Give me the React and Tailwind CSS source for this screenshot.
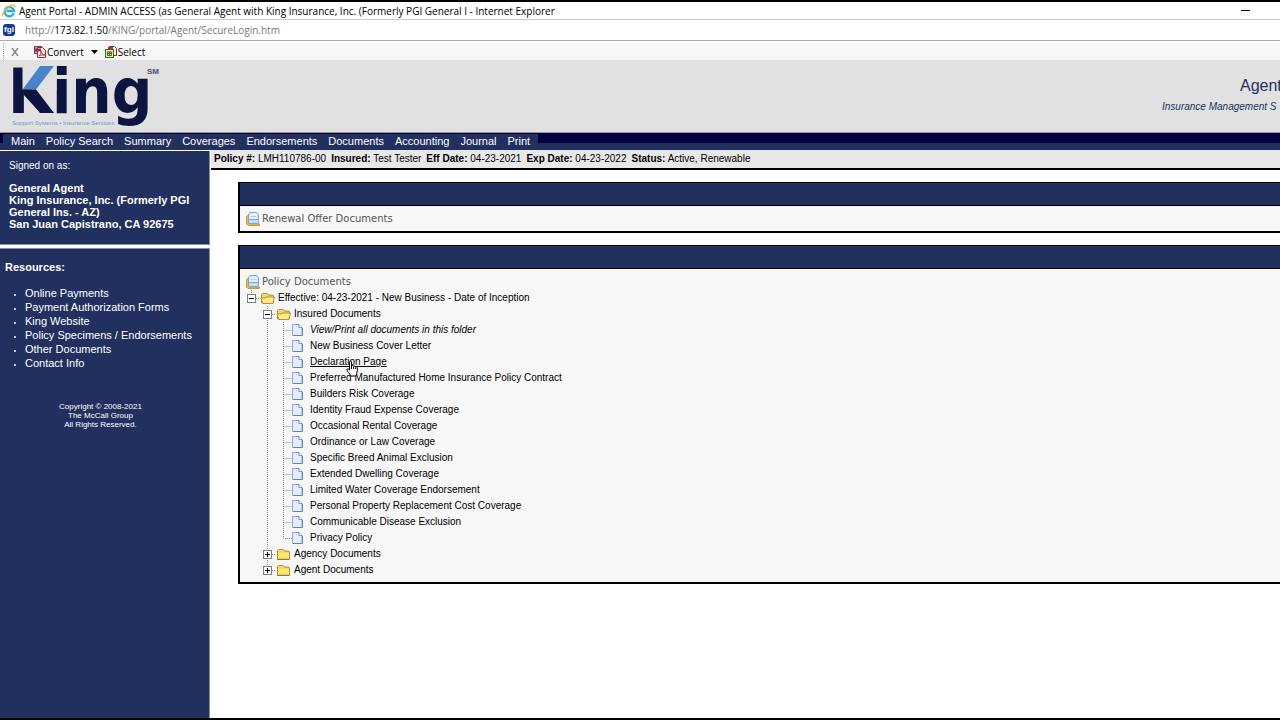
const menuItems = ["Main", "Policy Search", "Summary", "Coverages", "Endorsements", "Documents", "Accounting", "Journal", "Print"];

const resources = [
  "Online Payments",
  "Payment Authorization Forms",
  "King Website",
  "Policy Specimens / Endorsements",
  "Other Documents",
  "Contact Info",
];

const policyInfo = [
  { label: "Policy #:", value: "LMH110786-00" },
  { label: "Insured:", value: "Test Tester" },
  { label: "Eff Date:", value: "04-23-2021" },
  { label: "Exp Date:", value: "04-23-2022" },
  { label: "Status:", value: "Active, Renewable" },
];

const insuredDocs = [
  "View/Print all documents in this folder",
  "New Business Cover Letter",
  "Declaration Page",
  "Preferred Manufactured Home Insurance Policy Contract",
  "Builders Risk Coverage",
  "Identity Fraud Expense Coverage",
  "Occasional Rental Coverage",
  "Ordinance or Law Coverage",
  "Specific Breed Animal Exclusion",
  "Extended Dwelling Coverage",
  "Limited Water Coverage Endorsement",
  "Personal Property Replacement Cost Coverage",
  "Communicable Disease Exclusion",
  "Privacy Policy",
];

const IeIcon = () => (
  <svg width="14" height="14" viewBox="0 0 14 14" fill="none">
    <path d="M11.800 9.200A4.700 4.700 0 1 1 12 7H4.500" stroke="#35a9e3" strokeWidth="2.400" />
    <path d="M1 12.500C-.5 10 3.500 3.800 9 1.400c3-1.200 4.500 0 3.600 2.200" stroke="#e8b830" strokeWidth="1.300" />
  </svg>
);

const SiteIcon = () => (
  <svg width="12" height="12" viewBox="0 0 12 12">
    <rect width="12" height="12" rx="3" fill="#123a9c" />
    <text x="6" y="8" textAnchor="middle" fontSize="8" fontWeight="700" fill="#fff" fontFamily="Liberation Sans, sans-serif">fgl</text>
  </svg>
);

const PdfIcon = () => (
  <svg width="12" height="12" viewBox="0 0 12 12" fill="none">
    <rect x=".5" y=".5" width="7" height="7" fill="#8fb2dd" stroke="#39598e" />
    <path d="M3.500 1.500h5l3 3v7h-8z" fill="#fff" stroke="#b3202a" />
    <path d="M1 2.500h6v3H1z" fill="#c8202c" />
    <path d="M5 10c2-2 2.500-4 2-5 0 2 1.500 4 4 4-2-.4-4 0-6 1z" stroke="#c8202c" />
  </svg>
);

const SelectIcon = () => (
  <svg width="12" height="12" viewBox="0 0 12 12" fill="none">
    <path d="M4.500.5h5l2 2v7h-7z" fill="#fff" stroke="#8a2530" />
    <path d="M3 1h5v3H3z" fill="#b52632" />
    <rect x=".5" y="3.500" width="8" height="8" fill="#d9e7b8" stroke="#4c6b1f" />
    <path d="M2.500 6h4v3.500h-4zM2.500 7.500h4M4.500 6v3.500" stroke="#4c6b1f" />
  </svg>
);

const KingLogo = () => (
  <svg className="overflow-visible" width="152" height="70" viewBox="0 0 152 70" role="img" aria-label="King">
    <text x="0" y="53" fontSize="63" fontWeight="700" fill="#0c1440" fontFamily="DejaVu Sans Condensed, DejaVu Sans, sans-serif">King</text>
    {/* two-tone arm of the K */}
    <path d="M14.500 4H48.500V29.500H14.500z" fill="#e1e1e1" />
    <path d="M32 6h14L28 29.500H14.500z" fill="#4b82cc" />
    <path d="M14.500 29.500H28L46 53H32z" fill="#0c1440" />
    <text x="4" y="65" fontSize="6" fill="#7296c6" fontFamily="Liberation Sans, sans-serif">Support Systems • Insurance Services</text>
    <text x="139" y="14" fontSize="8" fontWeight="700" fill="#4a4e68" fontFamily="Liberation Sans, sans-serif">SM</text>
  </svg>
);

const StackIcon = () => (
  <svg className="shrink-0" width="16" height="16" viewBox="0 0 16 16">
    <path d="M1.500 5.500 4 3.500v9.500h10.500v1.500H3L1.500 13z" fill="#f0bf3e" stroke="#c69a35" />
    <path d="M5 1.500h6.500L13.500 4v8h-10V4z" fill="#e3f0fc" stroke="#6fa3cf" />
    <path d="M3.500 8.500h10v4h-10z" fill="#c3dcf4" stroke="#7fa6cc" />
    <path d="M5.500 5.500h6" stroke="#b4d2ee" />
  </svg>
);

const FolderIcon = ({ open }) => (
  <svg className="shrink-0" width="16" height="16" viewBox="0 0 16 16">
    <path d="M1.500 13V4.500L2.500 3.500h4.500l1 1.500h5l.5 1V13z" fill="#f5d862" stroke="#b09238" />
    {open ? (
      <path d="M3 13.500 1 8.500l.5-.5H5l1-1h8.500L13 13.500z" fill="#fcea84" stroke="#b09238" />
    ) : (
      <>
        <path d="M2 6.500h11v6H2z" fill="#fbe571" />
        <path d="M1 13.500h12.500" stroke="#94792a" />
      </>
    )}
  </svg>
);

const DocIcon = () => (
  <svg className="shrink-0" width="16" height="16" viewBox="0 0 16 16">
    <path d="M.5 2.500h6.500l3 3v8H.5z" fill="#e3eefd" stroke="#8aa9d6" />
    <path d="M7 2.500v3h3" fill="#fff" stroke="#7395cb" />
    <path d="M1 13.500h9.500V6" fill="none" stroke="#5f80ba" />
  </svg>
);

// One 16px cell of the tree's dotted guide lines
const Guide = ({ d }) => (
  <svg className="shrink-0" width="16" height="16" viewBox="0 0 16 16">
    <path d={d} stroke="#888" strokeDasharray="1 1" fill="none" />
  </svg>
);

const Toggle = ({ open, last, label }) => (
  <button type="button" aria-label={label} aria-expanded={!!open} className="shrink-0">
    <svg width="16" height="16" viewBox="0 0 16 16">
      <path d={last ? "M7.500 0V4M12 8.500H16" : "M7.500 0V16M12 8.500H16"} stroke="#888" strokeDasharray="1 1" />
      <rect x="3.500" y="4.500" width="8" height="8" fill="#fff" stroke="#808080" />
      <path d={open ? "M5 8.500H10" : "M5 8.500H10M7.500 6V11"} stroke="#000" />
    </svg>
  </button>
);

const FolderRow = ({ depth, open, last, children }) => (
  <div className="flex h-4 items-center">
    {depth > 0 && <span className="w-4 shrink-0" />}
    <Toggle open={open} last={last} label={children} />
    <FolderIcon open={open} />
    <a href="#" className="ml-0.5">{children}</a>
  </div>
);

const HandCursor = () => (
  <svg className="absolute left-9 top-1.5 z-10" width="12" height="17" viewBox="0 0 12 17">
    <path
      d="M3.500 9V2.200c0-1.600 2-1.600 2 0V6c.4-1 2-.8 2 .4.500-.8 1.900-.5 1.900.6.700-.6 1.900-.2 1.900.8V11c0 2-1.300 3-1.300 5H4.500C4.300 13.500 1 11.500.8 9.600c.2-1.200 1.700-.9 2.700.6z"
      fill="#fff"
      stroke="#000"
    />
    <path d="M5.500 6v3M7.500 7v2M9.400 7.500V9" stroke="#000" />
  </svg>
);

const Panel = ({ title, children }) => (
  <section className="border-l-2 border-b-2 border-black bg-[#f7f7f7]">
    <div className="h-6 border-y border-black bg-[#22305f]" />
    <div className="py-1 pl-1">
      <h2 className="flex h-[17px] items-center gap-px pl-px font-['DejaVu_Sans',sans-serif] text-[10px] text-[#555]">
        <StackIcon />
        {title}
      </h2>
      {children}
    </div>
  </section>
);

const Sidebar = () => (
  <aside className="flex w-[210px] shrink-0 flex-col gap-[3px] pt-px text-white">
    <div className="h-[94px] border-r border-b border-[#8a8fa8] bg-[#22305f] pl-[9px] pt-[9px] text-[11px] leading-3">
      <p className="text-[10px]">Signed on as:</p>
      <p className="mt-2.5 font-bold">
        General Agent
        <br />
        King Insurance, Inc. (Formerly PGI
        <br />
        General Ins. - AZ)
        <br />
        San Juan Capistrano, CA 92675
      </p>
    </div>
    <div className="flex-1 border-r border-t border-[#8a8fa8] bg-[#22305f] text-[11px]">
      <h2 className="pl-[5px] pt-[11px] font-bold leading-[14px]">Resources:</h2>
      <ul className="mt-3 list-disc pl-[25px] leading-[14px] marker:text-[8px]">
        {resources.map((r) => (
          <li key={r}>
            <a href="#">{r}</a>
          </li>
        ))}
      </ul>
      <p className="mt-8 pr-2 text-center text-[8px] leading-[9px]">
        Copyright © 2008-2021
        <br />
        The McCall Group
        <br />
        All Rights Reserved.
      </p>
    </div>
  </aside>
);

export default function App() {
  return (
    <div className="flex min-h-screen flex-col overflow-hidden border-y-2 border-black bg-white font-['Liberation_Sans',Arial,sans-serif] text-black">
      {/* Browser window */}
      <div className="flex h-[18px] items-center justify-between border-b border-[#ccc] pl-0.5 font-['Open_Sans',sans-serif] text-[10px] leading-none">
        <div className="flex items-center gap-[3px] whitespace-nowrap">
          <IeIcon />
          <span>Agent Portal - ADMIN ACCESS (as General Agent with King Insurance, Inc. (Formerly PGI General I - Internet Explorer</span>
        </div>
        <button type="button" aria-label="Minimize" className="mr-[30px] h-px w-[9px] bg-black" />
      </div>
      <div className="flex h-[21px] items-center gap-[10px] border-b border-[#aaa] pl-[3px] font-['Open_Sans',sans-serif] text-[10px] leading-none text-[#777]">
        <SiteIcon />
        <span className="whitespace-nowrap">
          http://<span className="text-black">173.82.1.50</span>/KING/portal/Agent/SecureLogin.htm
        </span>
      </div>
      <div className="mt-0.5 flex h-[17px] items-center bg-[#f7f7f7] pl-[3px] font-['Open_Sans',sans-serif] text-[10px] leading-none">
        <span className="h-full border-l border-dotted border-[#aaa]" />
        <button type="button" aria-label="Close toolbar" className="ml-[7px]">
          <svg width="8" height="8" viewBox="0 0 8 8" stroke="#888" strokeWidth="1.500">
            <path d="M1 0l6 8M7 0L1 8" />
          </svg>
        </button>
        <button type="button" className="ml-[15px] flex items-center gap-px">
          <PdfIcon />
          Convert
        </button>
        <button type="button" aria-label="Convert options" className="ml-[7px]">
          <svg width="7" height="4" viewBox="0 0 7 4">
            <path d="M0 0h7L3.500 4z" />
          </svg>
        </button>
        <button type="button" className="ml-[7px] flex items-center gap-px">
          <SelectIcon />
          Select
        </button>
      </div>

      {/* Portal header */}
      <header className="flex h-[73px] justify-between border-b border-[#999] bg-[#e1e1e1]">
        <div className="pl-2">
          <KingLogo />
        </div>
        <div className="w-[118px] overflow-hidden whitespace-nowrap pt-4 text-[#22305f]">
          <h1 className="pl-[78px] text-base leading-5">Agent</h1>
          <p className="mt-[3px] text-[10px] italic leading-4">Insurance Management S</p>
        </div>
      </header>

      <nav className="flex h-[17px] border-b-[7px] border-[#22305f] bg-[#000040]">
        <ul className="ml-[3px] mt-px flex h-4 shrink-0 gap-[11px] bg-[#22305f] px-2 text-[11px] leading-[15px] text-white">
          {menuItems.map((item) => (
            <li key={item}>
              <a href="#">{item}</a>
            </li>
          ))}
        </ul>
      </nav>

      <div className="flex flex-1">
        <Sidebar />
        <main className="min-w-0 flex-1">
          <div className="ml-px flex h-5 items-center gap-[5px] border-b-2 border-black bg-[#e8e8e8] pl-[3px] text-[10px] leading-none">
            {policyInfo.map(({ label, value }) => (
              <span key={label}>
                <b>{label}</b> {value}
              </span>
            ))}
          </div>

          <div className="flex flex-col gap-3 pl-7 pt-3">
            <Panel title="Renewal Offer Documents" />
            <Panel title="Policy Documents">
              <div className="text-[10px] leading-4">
                <FolderRow depth={0} open last>
                  Effective: 04-23-2021 - New Business - Date of Inception
                </FolderRow>
                <FolderRow depth={1} open>
                  Insured Documents
                </FolderRow>
                <ul>
                  {insuredDocs.map((doc, i) => (
                    <li key={doc} className="flex h-4 items-center">
                      <span className="w-4 shrink-0" />
                      <Guide d="M7.500 0V16" />
                      <Guide d={i === insuredDocs.length - 1 ? "M7.500 0V8.500H16" : "M7.500 0V16M7.500 8.500H16"} />
                      <DocIcon />
                      <span className="relative ml-0.5">
                        <a href="#" className={i === 0 ? "italic" : i === 2 ? "underline" : ""}>{doc}</a>
                        {i === 2 && <HandCursor />}
                      </span>
                    </li>
                  ))}
                </ul>
                <FolderRow depth={1}>Agency Documents</FolderRow>
                <FolderRow depth={1} last>
                  Agent Documents
                </FolderRow>
              </div>
            </Panel>
          </div>
        </main>
      </div>
    </div>
  );
}
